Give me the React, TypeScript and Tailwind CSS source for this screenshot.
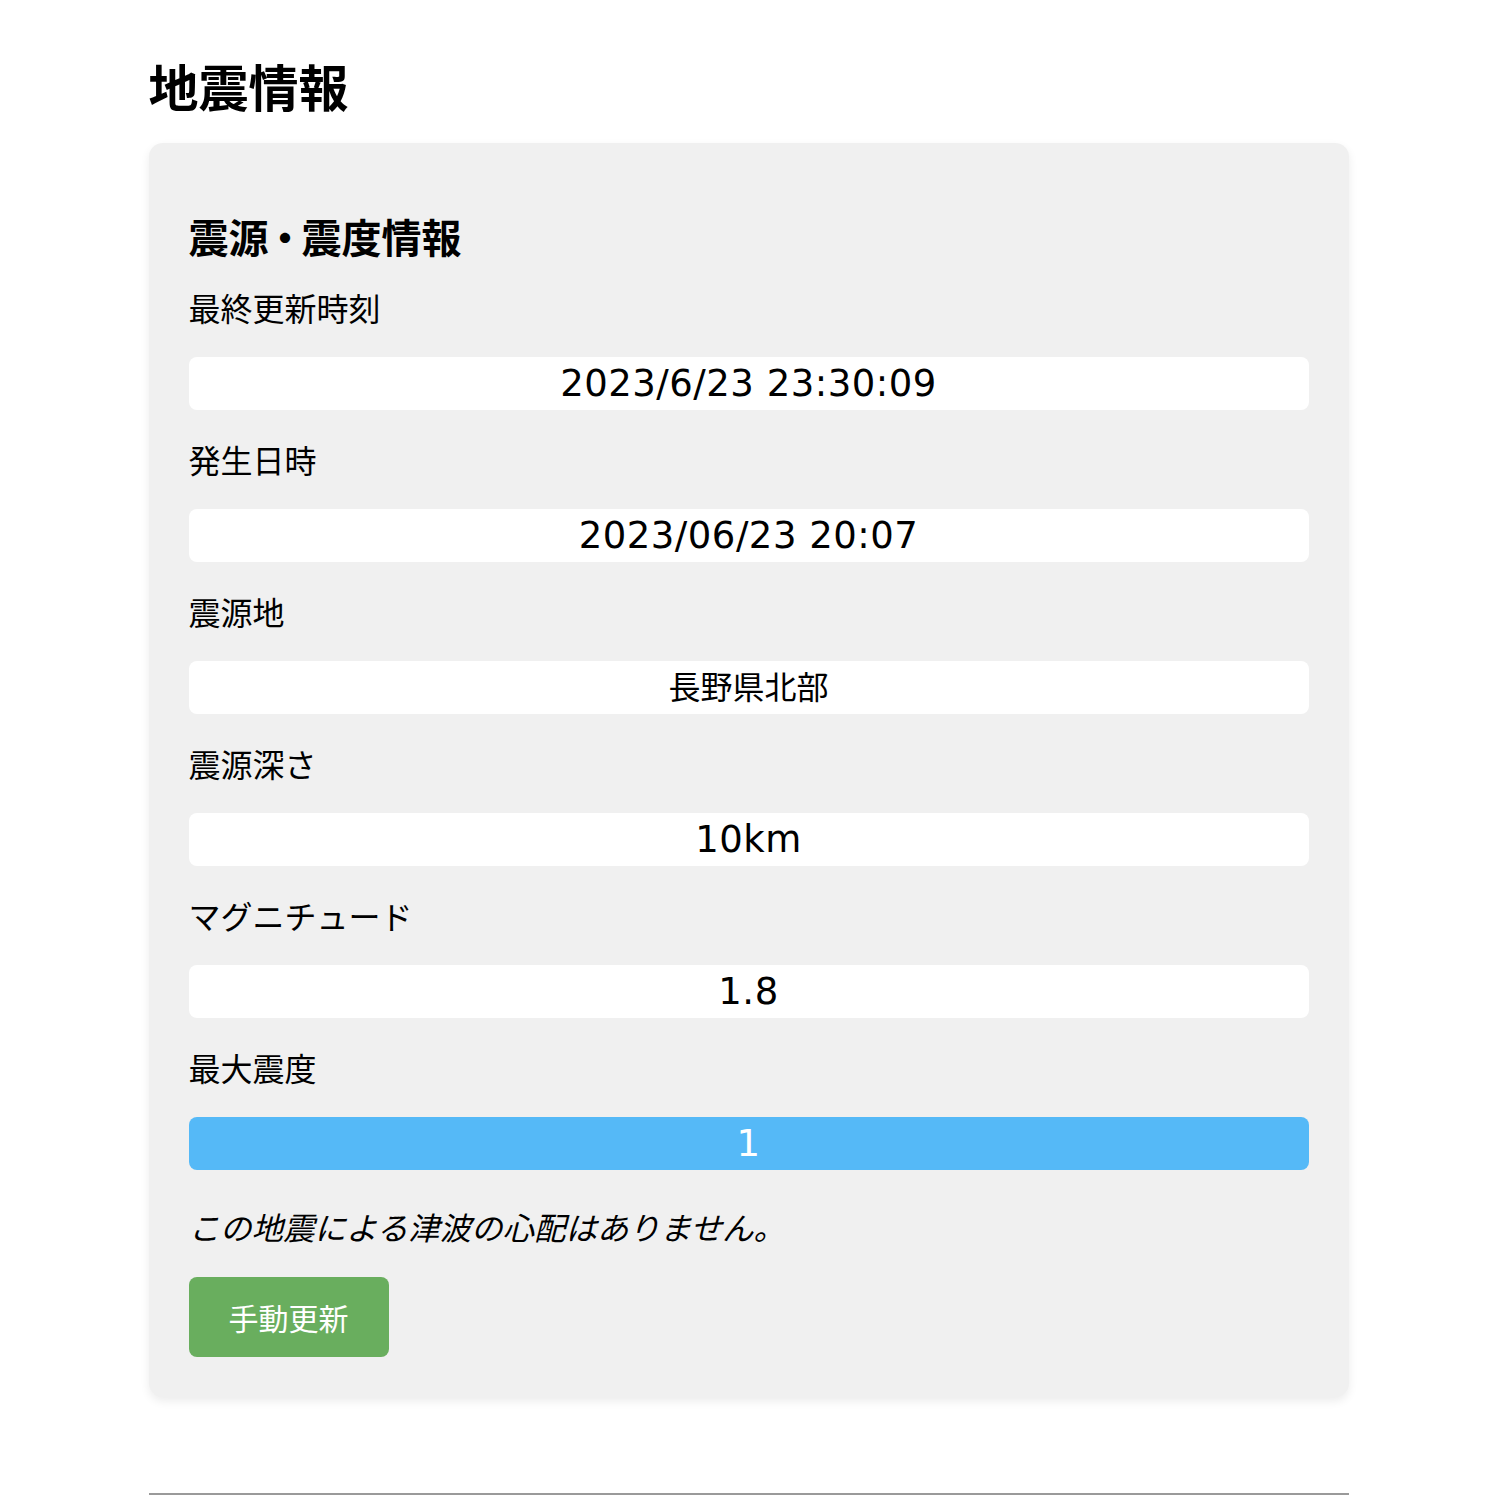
const rows = [
  { label: "最終更新時刻", value: "2023/6/23 23:30:09", latin: true },
  { label: "発生日時", value: "2023/06/23 20:07", latin: true },
  { label: "震源地", value: "長野県北部", latin: false },
  { label: "震源深さ", value: "10km", latin: true },
  { label: "マグニチュード", value: "1.8", latin: true },
];

const Label = ({ text, first = false }: { text: string; first?: boolean }) => (
  <div
    className={`${first ? "mt-[18px]" : "mt-[27px]"} text-[32px] leading-[44px] pb-[4px] font-['Noto_Sans_CJK_JP',sans-serif]`}
  >
    {text}
  </div>
);

const ValueBox = ({ value, latin, tone = "white" }: { value: string; latin: boolean; tone?: "white" | "blue" }) => (
  <div
    className={`mt-[24px] h-[53px] rounded-[8px] flex items-center justify-center ${
      tone === "blue" ? "bg-[#55b9f7] text-white" : "bg-white text-black"
    } ${latin ? "text-[37px] tracking-[0.5px]" : "text-[32px]"}`}
  >
    {value}
  </div>
);

export default function App() {
  return (
    <div className="min-h-[1497px] bg-white font-['DejaVu_Sans','Noto_Sans_CJK_JP',sans-serif] text-black">
      <div className="w-[1200px] mx-auto pt-[48px]">
        <h1 className="text-[50px] leading-[74px] font-bold mb-[21px] font-['Noto_Sans_CJK_JP',sans-serif]">地震情報</h1>

        <div className="bg-[#f0f0f0] rounded-[14px] shadow-[0_4px_10px_rgba(0,0,0,0.08)] p-[40px]">
          <h2 className="mt-[24px] text-[40px] leading-[58px] pb-[2px] font-bold font-['Noto_Sans_CJK_JP',sans-serif]">
            震源<span className="-mx-[3.5px]">・</span>震度情報
          </h2>

          {rows.map((r, i) => (
            <div key={r.label}>
              <Label text={r.label} first={i === 0} />
              <ValueBox value={r.value} latin={r.latin} />
            </div>
          ))}

          <Label text="最大震度" />
          <ValueBox value="1" latin tone="blue" />

          <p className="mt-[34px] text-[31.5px] leading-[44px] pb-[4px] italic font-['Noto_Sans_CJK_JP',sans-serif]">
            この地震による津波の心配はありません。
          </p>

          <button className="mt-[25px] w-[200px] h-[80px] rounded-[8px] bg-[#69ae5e] text-white text-[30px] font-['Noto_Sans_CJK_JP',sans-serif]">
            手動更新
          </button>
        </div>

        <div className="mt-[96px] h-[2px] bg-[#9a9a9a]" />
      </div>
    </div>
  );
}
